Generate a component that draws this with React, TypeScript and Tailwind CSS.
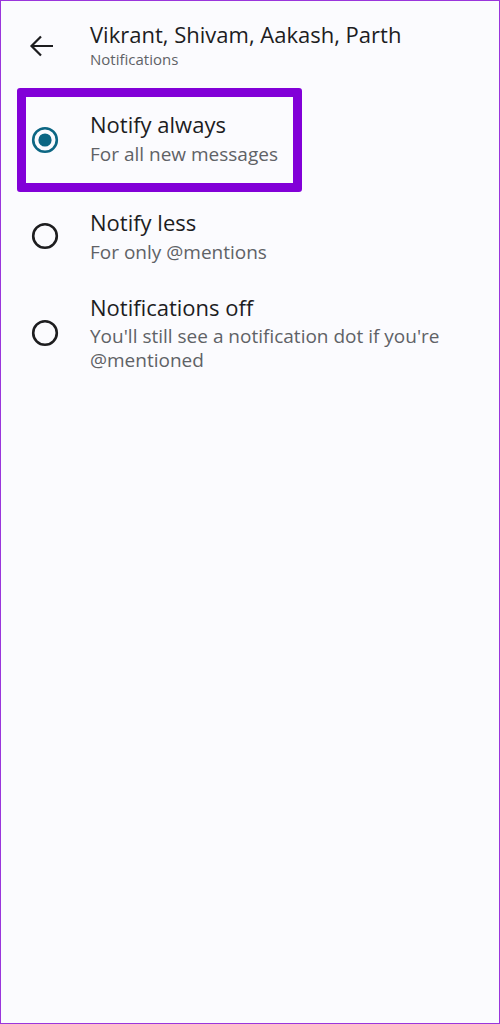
import React from "react";

function Radio({ checked }: { checked: boolean }) {
  return (
    <svg width="28" height="28" viewBox="0 0 28 28" className="shrink-0">
      <circle cx="14" cy="14" r="11.8" fill="none" stroke={checked ? "#0c6683" : "#1d1d1f"} strokeWidth="2.6" />
      {checked && <circle cx="14" cy="14" r="6.6" fill="#0c6683" />}
    </svg>
  );
}

export default function App() {
  const font = { fontFamily: "'Open Sans', Roboto, sans-serif" };
  return (
    <div className="w-[500px] h-[1024px] bg-[#fbfbfe] border border-[#9a35dc] box-border" style={font}>
      <div className="flex items-start pt-[20px]">
        <div className="w-[89px] flex pl-[27px] pt-[12px]">
          <svg width="26" height="26" viewBox="0 0 26 26">
            <path d="M25 13H3.5M13 3.5L3.5 13L13 22.5" fill="none" stroke="#1d1d1f" strokeWidth="2.2" />
          </svg>
        </div>
        <div className="flex flex-col">
          <div className="text-[22px] leading-[26px] text-[#1d1d1f]">Vikrant, Shivam, Aakash, Parth</div>
          <div className="text-[15px] leading-[18px] text-[#5f6266] mt-[3px]">Notifications</div>
        </div>
      </div>

      <div className="mt-[20px] ml-[16px] w-[285px] h-[104px] border-[9px] border-[#8200d8] rounded-[3px] flex items-center box-border">
        <div className="pl-[5px] w-[64px]">
          <Radio checked />
        </div>
        <div className="flex flex-col -mt-[3px]">
          <div className="text-[22px] leading-[26px] text-[#1d1d1f]">Notify always</div>
          <div className="text-[19px] leading-[24px] text-[#5f6266] mt-[5px]">For all new messages</div>
        </div>
      </div>

      <div className="flex items-center mt-[14px] h-[60px]">
        <div className="pl-[30px] w-[89px]">
          <Radio checked={false} />
        </div>
        <div className="flex flex-col">
          <div className="text-[22px] leading-[26px] text-[#1d1d1f]">Notify less</div>
          <div className="text-[19px] leading-[24px] text-[#5f6266] mt-[5px]">For only @mentions</div>
        </div>
      </div>

      <div className="flex items-center mt-[28px]">
        <div className="pl-[30px] w-[89px]">
          <Radio checked={false} />
        </div>
        <div className="flex flex-col">
          <div className="text-[22px] leading-[26px] text-[#1d1d1f]">Notifications off</div>
          <div className="text-[19px] leading-[24px] text-[#5f6266] mt-[4px] w-[390px]">You'll still see a notification dot if you're @mentioned</div>
        </div>
      </div>
    </div>
  );
}
